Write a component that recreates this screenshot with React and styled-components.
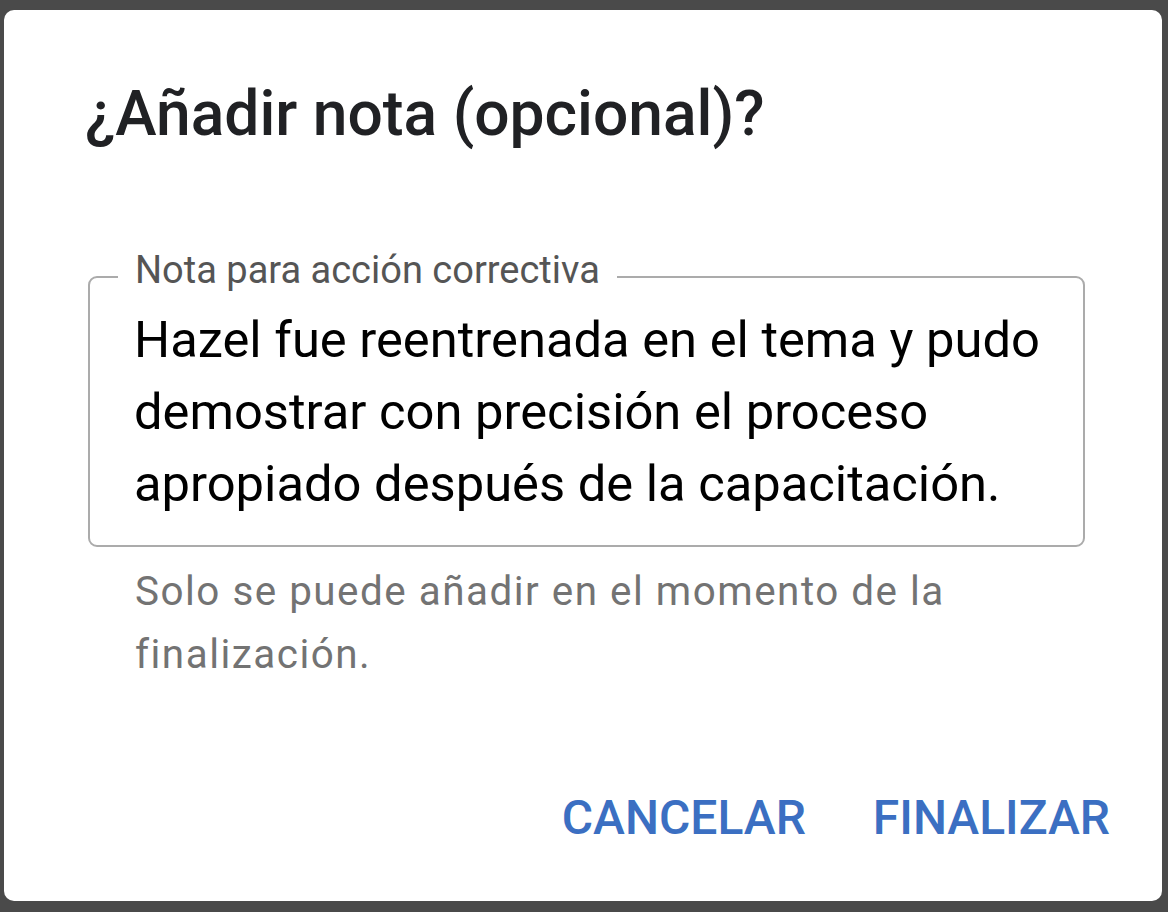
import styled, { createGlobalStyle } from "styled-components";

const Global = createGlobalStyle`
  html, body {
    margin: 0;
    padding: 0;
    background: #4a4a4a;
  }
  body {
    font-family: Roboto, "Noto Sans", sans-serif;
  }
`;

const Page = styled.div`
  width: 1168px;
  height: 912px;
  box-sizing: border-box;
  padding: 10px 6px 11px 4px;
`;

const Dialog = styled.div`
  height: 100%;
  box-sizing: border-box;
  background: #fff;
  border-radius: 10px;
  display: flex;
  flex-direction: column;
  padding: 64px 52px 0 84px;
`;

const Title = styled.h2`
  margin: 0 0 0 -3px;
  font-size: 62.3px;
  font-weight: 500;
  line-height: 80px;
  color: #202124;
`;

const Field = styled.fieldset`
  margin: 97px 25px 0 0;
  padding: 0;
  border: 2px solid #ababab;
  border-radius: 9px;
  min-width: 0;
`;

const Legend = styled.legend`
  margin-left: 28px;
  padding: 0 17px 14px;
  font-size: 38px;
  line-height: 38px;
  color: #555;
`;

const Value = styled.div`
  padding: 1px 30px 25px 44px;
  font-size: 50.7px;
  line-height: 72px;
  color: #000;
`;

const Helper = styled.p`
  margin: 13px 100px 0 47px;
  font-size: 40.4px;
  line-height: 63px;
  letter-spacing: 1.5px;
  color: #737373;
`;

const Actions = styled.div`
  margin-top: auto;
  margin-bottom: 55px;
  display: flex;
  justify-content: flex-end;
  gap: 67px;
`;

const Button = styled.button`
  border: 0;
  background: none;
  padding: 0;
  font-family: Roboto, "Noto Sans", sans-serif;
  font-size: 48px;
  line-height: 56px;
  font-weight: 500;
  color: #3b6fc2;
  cursor: pointer;
`;

export default function App() {
  return (
    <Page>
      <Global />
      <Dialog>
        <Title>¿Añadir nota (opcional)?</Title>
        <Field>
          <Legend>Nota para acción correctiva</Legend>
          <Value>
            Hazel fue reentrenada en el tema y pudo demostrar con precisión el proceso apropiado después de la capacitación.
          </Value>
        </Field>
        <Helper>Solo se puede añadir en el momento de la finalización.</Helper>
        <Actions>
          <Button>CANCELAR</Button>
          <Button>FINALIZAR</Button>
        </Actions>
      </Dialog>
    </Page>
  );
}
